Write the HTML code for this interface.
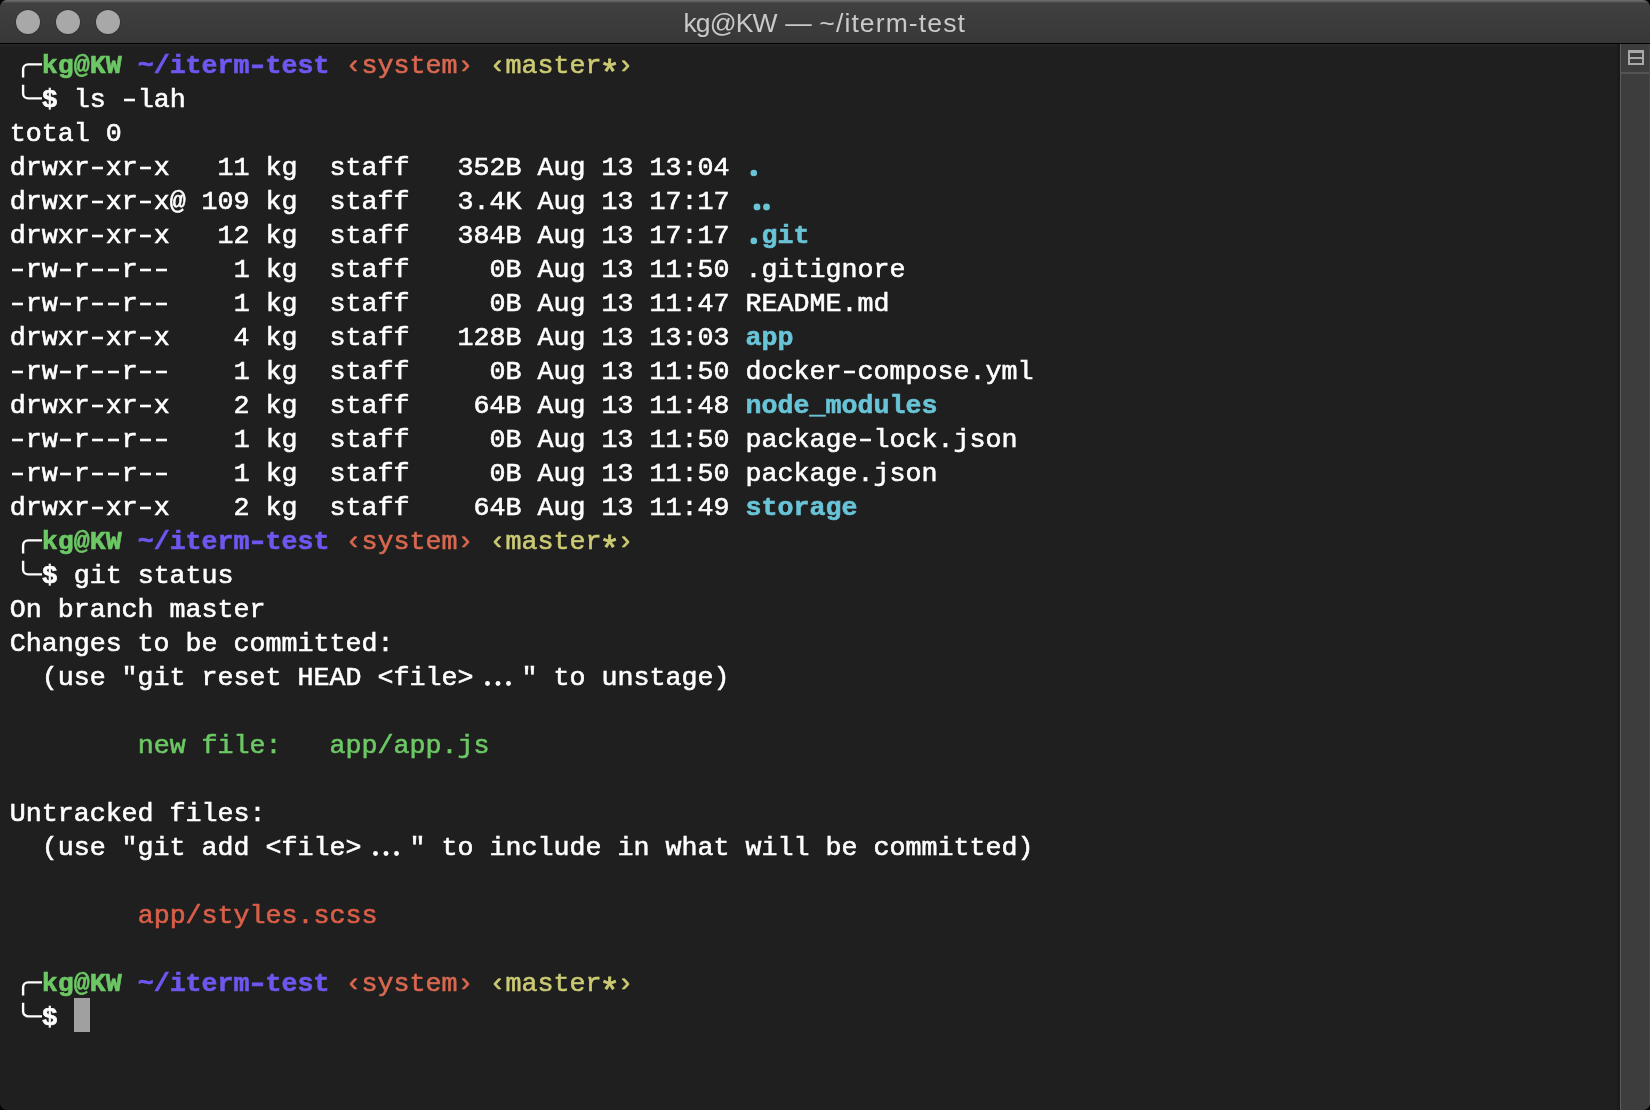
<!DOCTYPE html>
<html><head><meta charset="utf-8">
<style>
html,body{margin:0;padding:0;}
body{width:1650px;height:1110px;background:#000;overflow:hidden;position:relative;}
#win{-webkit-font-smoothing:antialiased;position:absolute;left:0;top:0;width:1650px;height:1110px;background:#1f1f1f;border-radius:7px;overflow:hidden;}
#title{will-change:transform;position:absolute;left:0;top:0;width:1650px;height:43px;background:linear-gradient(#414141,#373737);border-bottom:1px solid #000;}
#title .hl{position:absolute;left:0;top:0;width:100%;height:3px;background:linear-gradient(#6c6c6c,#666 35%,#414141);}
#below{position:absolute;left:0;top:44px;width:1650px;height:2px;background:#252525;}
.dot{position:absolute;top:10px;width:24px;height:24px;border-radius:50%;background:#a8a8a8;box-shadow:0 0 0 0.7px rgba(0,0,0,0.2);}
.tt{position:absolute;top:7.6px;font-family:"Liberation Sans",sans-serif;font-size:26.5px;color:#c9c9c9;white-space:pre;}
#term{-webkit-text-stroke:0.6px currentColor;will-change:transform;position:absolute;left:10px;top:50px;transform:translate(-0.35px,-0.55px);font-family:"Liberation Mono",monospace;font-size:26.67px;line-height:34px;color:#fff;}
#term div{height:34px;white-space:pre;}
b{font-weight:bold;}
.h{display:inline-block;font-style:normal;transform:scaleX(1.38);}
.ast{display:inline-block;transform:translateY(9.5px) scale(1.3);}
.g{color:#6cc864}.p{color:#6c58f0}.o{color:#d96850}.y{color:#cccb74}.c{color:#68c4d6}.r{color:#da5f48}
#cursor{position:absolute;left:74px;top:998px;width:16px;height:34px;background:#a0a0a0;}
#sb{position:absolute;left:1620px;top:44px;width:29px;height:1066px;background:#3d3d3d;border-left:1px solid #5c5c5c;}
#sbsep{position:absolute;left:1621px;top:72px;width:29px;height:2px;background:#555;}
#sbicon{position:absolute;left:1628px;top:50px;width:12px;height:10px;border:2px solid #a9a9a9;border-top-width:3.6px;}
#sbicon:after{content:"";position:absolute;left:0;right:0;top:4px;height:2px;background:#a9a9a9;}
#sbdark{position:absolute;left:1617px;top:44px;width:3px;height:1066px;background:linear-gradient(90deg,#1b1b1b,#1b1b1b 60%,#191919);}
#sbedge{position:absolute;left:1649px;top:44px;width:1px;height:1066px;background:#474747;}
</style></head><body>
<div id="win">
<div id="title"><div class="hl"></div>
<div class="dot" style="left:16px"></div><div class="dot" style="left:56px"></div><div class="dot" style="left:96px"></div>
<div class="tt" style="left:683.5px;letter-spacing:-0.9px">kg@KW</div><div class="tt" style="left:785.2px">—</div><div class="tt" style="left:819.3px;letter-spacing:1.12px">~/iterm-test</div>
</div>
<div id="term">
<div>  <b class="g">kg@KW</b> <b class="p">~/iterm<i class="h">-</i>test</b> <span class="o">‹system›</span> <span class="y">‹master<span class="ast">*</span>›</span></div>
<div>  <b>$</b> ls <i class="h">-</i>lah</div>
<div>total 0</div>
<div>drwxr<i class="h">-</i>xr<i class="h">-</i>x   11 kg  staff   352B Aug 13 13:04 </div>
<div>drwxr<i class="h">-</i>xr<i class="h">-</i>x@ 109 kg  staff   3.4K Aug 13 17:17 </div>
<div>drwxr<i class="h">-</i>xr<i class="h">-</i>x   12 kg  staff   384B Aug 13 17:17 <b class="c"> git</b></div>
<div><i class="h">-</i>rw<i class="h">-</i>r<i class="h">-</i><i class="h">-</i>r<i class="h">-</i><i class="h">-</i>    1 kg  staff     0B Aug 13 11:50 .gitignore</div>
<div><i class="h">-</i>rw<i class="h">-</i>r<i class="h">-</i><i class="h">-</i>r<i class="h">-</i><i class="h">-</i>    1 kg  staff     0B Aug 13 11:47 README.md</div>
<div>drwxr<i class="h">-</i>xr<i class="h">-</i>x    4 kg  staff   128B Aug 13 13:03 <b class="c">app</b></div>
<div><i class="h">-</i>rw<i class="h">-</i>r<i class="h">-</i><i class="h">-</i>r<i class="h">-</i><i class="h">-</i>    1 kg  staff     0B Aug 13 11:50 docker<i class="h">-</i>compose.yml</div>
<div>drwxr<i class="h">-</i>xr<i class="h">-</i>x    2 kg  staff    64B Aug 13 11:48 <b class="c">node_modules</b></div>
<div><i class="h">-</i>rw<i class="h">-</i>r<i class="h">-</i><i class="h">-</i>r<i class="h">-</i><i class="h">-</i>    1 kg  staff     0B Aug 13 11:50 package<i class="h">-</i>lock.json</div>
<div><i class="h">-</i>rw<i class="h">-</i>r<i class="h">-</i><i class="h">-</i>r<i class="h">-</i><i class="h">-</i>    1 kg  staff     0B Aug 13 11:50 package.json</div>
<div>drwxr<i class="h">-</i>xr<i class="h">-</i>x    2 kg  staff    64B Aug 13 11:49 <b class="c">storage</b></div>
<div>  <b class="g">kg@KW</b> <b class="p">~/iterm<i class="h">-</i>test</b> <span class="o">‹system›</span> <span class="y">‹master<span class="ast">*</span>›</span></div>
<div>  <b>$</b> git status</div>
<div>On branch master</div>
<div>Changes to be committed:</div>
<div>  (use "git reset HEAD &lt;file&gt;   " to unstage)</div>
<div> </div>
<div>        <span class="g">new file:   app/app.js</span></div>
<div> </div>
<div>Untracked files:</div>
<div>  (use "git add &lt;file&gt;   " to include in what will be committed)</div>
<div> </div>
<div>        <span class="r">app/styles.scss</span></div>
<div> </div>
<div>  <b class="g">kg@KW</b> <b class="p">~/iterm<i class="h">-</i>test</b> <span class="o">‹system›</span> <span class="y">‹master<span class="ast">*</span>›</span></div>
<div>  <b>$</b> </div>
</div>
<div id="below"></div><div id="cursor"></div>
<svg id="boxes" width="1650" height="1110" style="position:absolute;left:0;top:0" fill="none" stroke="#fff" stroke-width="2.4">
<path d="M42 64.4H28.1A5 5 0 0 0 23.1 69.4V77.6"/>
<path d="M23.1 84.8V93.4A5 5 0 0 0 28.1 98.4H42"/>
<path d="M42 540.4H28.1A5 5 0 0 0 23.1 545.4V553.6"/>
<path d="M23.1 560.8V569.4A5 5 0 0 0 28.1 574.4H42"/>
<path d="M42 982.4H28.1A5 5 0 0 0 23.1 987.4V995.6"/>
<path d="M23.1 1002.8V1011.4A5 5 0 0 0 28.1 1016.4H42"/>
<g fill="#fff" stroke="none"><circle cx="487.5" cy="683.5" r="2.45"/><circle cx="498" cy="683.5" r="2.45"/><circle cx="508.5" cy="683.5" r="2.45"/><circle cx="375.5" cy="853.5" r="2.45"/><circle cx="386" cy="853.5" r="2.45"/><circle cx="396.5" cy="853.5" r="2.45"/></g>
<g fill="#68c4d6" stroke="none"><circle cx="753.8" cy="173" r="3.3"/><circle cx="757" cy="206.9" r="3.4"/><circle cx="766.5" cy="206.9" r="3.4"/><circle cx="753.8" cy="240.9" r="3.3"/></g>
</svg>
<div id="sbdark"></div>
<div id="sb"></div><div id="sbsep"></div><div id="sbedge"></div><div id="sbicon"></div>
</div>
</body></html>
